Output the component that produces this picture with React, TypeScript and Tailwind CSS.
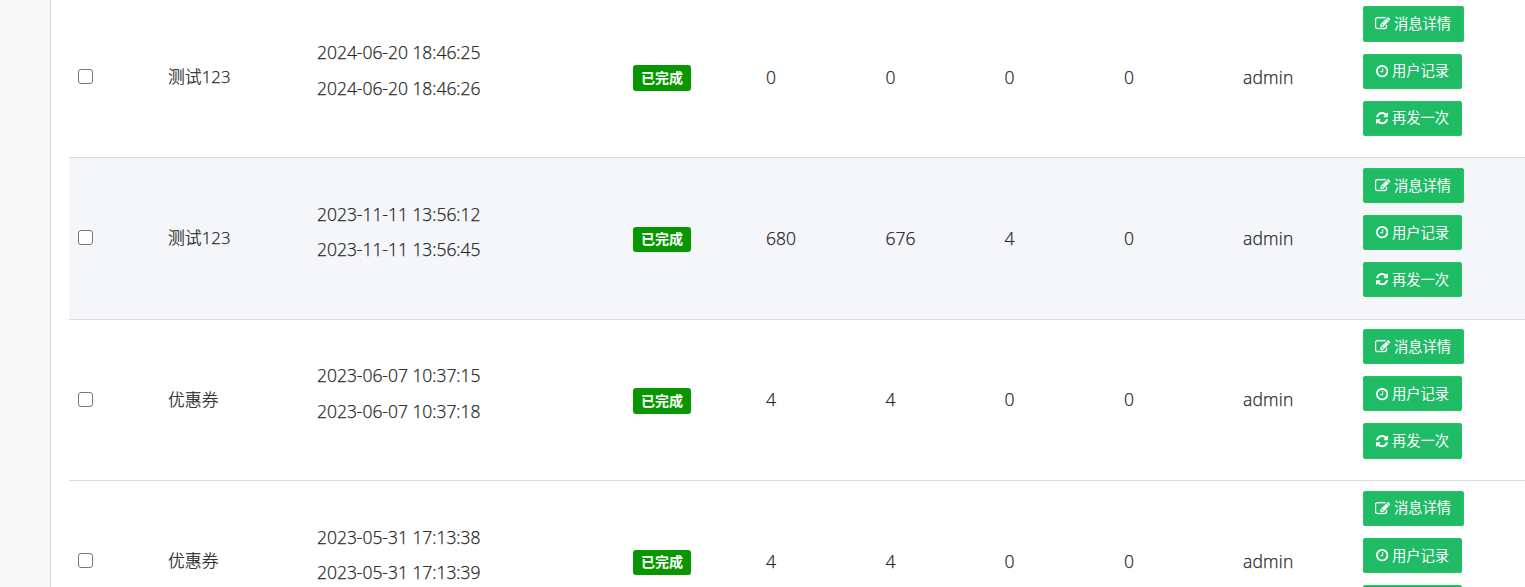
import React from "react";

type Task = {
  name: string;
  start: string;
  end: string;
  total: number;
  success: number;
  failed: number;
  pending: number;
  user: string;
  active?: boolean;
};

const tasks: Task[] = [
  { name: "测试123", start: "2024-06-20 18:46:25", end: "2024-06-20 18:46:26", total: 0, success: 0, failed: 0, pending: 0, user: "admin" },
  { name: "测试123", start: "2023-11-11 13:56:12", end: "2023-11-11 13:56:45", total: 680, success: 676, failed: 4, pending: 0, user: "admin", active: true },
  { name: "优惠券", start: "2023-06-07 10:37:15", end: "2023-06-07 10:37:18", total: 4, success: 4, failed: 0, pending: 0, user: "admin" },
  { name: "优惠券", start: "2023-05-31 17:13:38", end: "2023-05-31 17:13:39", total: 4, success: 4, failed: 0, pending: 0, user: "admin" },
];

const EditIcon = () => (
  <svg viewBox="0 0 1792 1792" className="-ml-px h-[15.3px] w-[15.3px] shrink-0" fill="currentColor" stroke="currentColor" strokeWidth="30">
    <path d="M888 1184l116-116-152-152-116 116v56h96v96h56zm440-720q-16-16-33 1l-350 350q-17 17-1 33t33-1l350-350q17-17 1-33zm80 594v190q0 119-84.5 203.5t-203.5 84.5h-832q-119 0-203.5-84.5t-84.5-203.5v-832q0-119 84.5-203.5t203.5-84.5h832q63 0 117 25 15 7 18 23 3 17-9 29l-49 49q-14 14-32 8-23-6-45-6h-832q-66 0-113 47t-47 113v832q0 66 47 113t113 47h832q66 0 113-47t47-113v-126q0-13 9-22l64-64q15-15 35-7t20 29zm-96-738l288 288-672 672h-288v-288zm444 132l-92 92-288-288 92-92q28-28 68-28t68 28l152 152q28 28 28 68t-28 68z" />
  </svg>
);

const ClockIcon = () => (
  <svg viewBox="128 0 1536 1792" className="h-[14.3px] w-[12.3px] shrink-0" fill="currentColor">
    <path d="M1024 544v448q0 14-9 23t-23 9h-320q-14 0-23-9t-9-23v-64q0-14 9-23t23-9h224v-352q0-14 9-23t23-9h64q14 0 23 9t9 23zm416 352q0-148-73-273t-198-198-273-73-273 73-198 198-73 273 73 273 198 198 273 73 273-73 198-198 73-273zm224 0q0 209-103 385.5t-279.5 279.5-385.5 103-385.5-103-279.5-279.5-103-385.5 103-385.5 279.5-279.5 385.5-103 385.5 103 279.5 279.5 103 385.5z" />
  </svg>
);

const RefreshIcon = () => (
  <svg viewBox="128 0 1536 1792" className="h-[14.3px] w-[12.3px] shrink-0" fill="currentColor">
    <path d="M1639 1056q0 5-1 7-64 268-268 434.5t-478 166.5q-146 0-282.5-55t-243.5-157l-129 129q-19 19-45 19t-45-19-19-45v-448q0-26 19-45t45-19h448q26 0 45 19t19 45-19 45l-137 137q71 66 161 102t187 36q134 0 250-65t186-179q11-17 53-117 8-23 30-23h192q13 0 22.5 9.5t9.5 22.5zm25-800v448q0 26-19 45t-45 19h-448q-26 0-45-19t-19-45 19-45l138-138q-148-137-349-137-134 0-250 65t-186 179q-11 17-53 117-8 23-30 23h-199q-13 0-22.5-9.5t-9.5-22.5v-7q65-268 270-434.5t480-166.5q146 0 284 55.5t245 156.5l130-129q19-19 45-19t45 19 19 45z" />
  </svg>
);

const actions = [
  { label: "消息详情", icon: <EditIcon /> },
  { label: "用户记录", icon: <ClockIcon /> },
  { label: "再发一次", icon: <RefreshIcon /> },
];

function ActionButton({ label, icon }: { label: string; icon: React.ReactNode }) {
  return (
    <button className="flex h-[35.2px] items-center gap-[4px] rounded-[2px] border border-[#22c55a] bg-[#1fbb65] pr-[12.1px] pl-[11.6px] text-[14.3px] leading-none font-normal whitespace-nowrap text-white [-webkit-text-stroke:0]">
      {icon}
      <span className="pt-[0.8px]">{label}</span>
    </button>
  );
}

function TaskRow({ task }: { task: Task }) {
  return (
    <div
      className={`grid h-[161.4px] shrink-0 grid-cols-[99px_149px_316px_133px_119.5px_119px_119.5px_119px_120px_162px] border-t border-[#dcdcdc] ${
        task.active ? "bg-[#f4f6fa]" : "bg-white"
      }`}
    >
      <div className="flex items-center pb-[1.4px] pl-[9px]">
        <input
          type="checkbox"
          className="size-[15px] appearance-none rounded-[3px] border border-[#767676] bg-white"
        />
      </div>
      <div className="flex items-center pb-[0.6px] text-[16.8px] tracking-[0.05px]">{task.name}</div>
      <div className="flex flex-col justify-center pb-[12px] leading-[35.6px] tracking-[-0.03px]">
        <div>{task.start}</div>
        <div>{task.end}</div>
      </div>
      <div className="flex items-center pt-[2.3px]">
        <span className="flex h-[25.4px] items-center rounded-[3px] bg-[#089700] px-[8px] pb-[0.4px] text-[14px] leading-none font-bold text-white [-webkit-text-stroke:0]">
          已完成
        </span>
      </div>
      <div className="flex items-center pb-[0.6px]">{task.total}</div>
      <div className="flex items-center pb-[0.6px]">{task.success}</div>
      <div className="flex items-center pb-[0.6px]">{task.failed}</div>
      <div className="flex items-center pb-[0.6px]">{task.pending}</div>
      <div className="flex items-center pb-[0.6px] tracking-[0.2px]">{task.user}</div>
      <div className="flex flex-col items-start gap-[11.9px] pt-[9.7px]">
        {actions.map((action) => (
          <ActionButton key={action.label} label={action.label} icon={action.icon} />
        ))}
      </div>
    </div>
  );
}

export default function App() {
  return (
    <div className="flex h-[587px] w-[1525px] overflow-hidden bg-white font-['Open_Sans','Noto_Sans_CJK_SC',sans-serif] text-[17.5px] font-light text-[#262626] [-webkit-text-stroke:0.25px_#262626]">
      <aside className="w-[51px] shrink-0 border-r border-[#dcdcdc] bg-[#f8f8f8]" />
      <main className="-mt-[4.25px] ml-[18px] flex w-[1456px] shrink-0 flex-col">
        {tasks.map((task) => (
          <TaskRow key={task.start} task={task} />
        ))}
      </main>
    </div>
  );
}
